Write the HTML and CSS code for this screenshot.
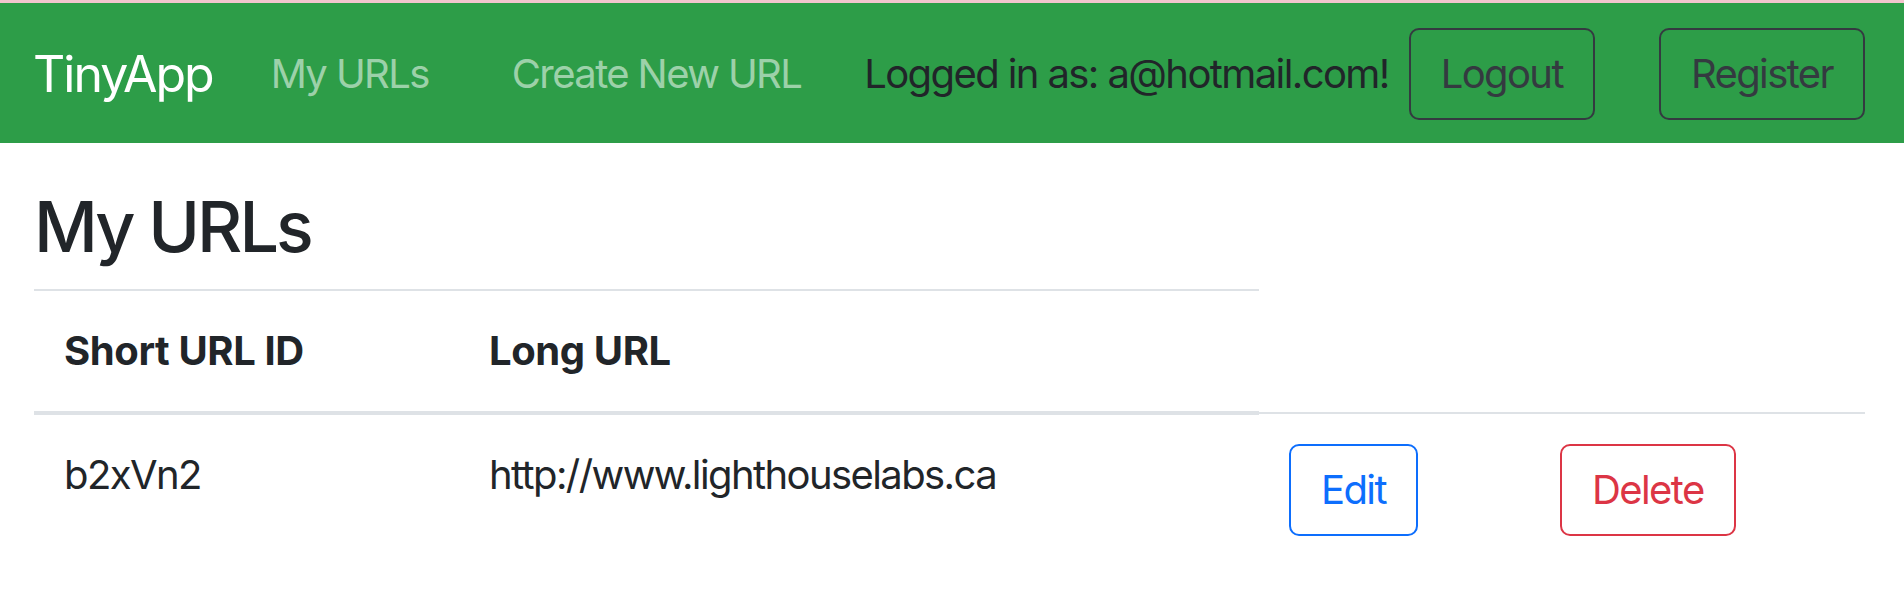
FILE: index.html
```html
<!DOCTYPE html>
<html lang="en">
<head>
<meta charset="utf-8">
<title>TinyApp</title>
<link rel="stylesheet" href="styles.css">
</head>
<body>
<div class="topline"></div>
<nav class="navbar">
  <a class="brand" href="#">TinyApp</a>
  <ul class="nav-links">
    <li><a class="nav-link" href="#">My URLs</a></li>
    <li><a class="nav-link" href="#">Create New URL</a></li>
  </ul>
  <div class="nav-right">
    <span class="user">Logged in as: a@hotmail.com!</span>
    <button class="btn btn-outline-dark">Logout</button>
    <button class="btn btn-outline-dark register">Register</button>
  </div>
</nav>
<main class="container">
  <h2 class="title">My URLs</h2>
  <table class="url-table">
    <colgroup>
      <col class="col-id">
      <col class="col-url">
      <col class="col-edit">
      <col class="col-delete">
    </colgroup>
    <thead>
      <tr><th>Short URL ID</th><th>Long URL</th></tr>
    </thead>
    <tbody>
      <tr>
        <td>b2xVn2</td>
        <td>http://www.lighthouselabs.ca</td>
        <td><button class="btn btn-outline-primary">Edit</button></td>
        <td><button class="btn btn-outline-danger">Delete</button></td>
      </tr>
    </tbody>
  </table>
</main>
</body>
</html>
```
FILE: styles.css
```css
* { box-sizing: border-box; }
html, body { margin: 0; padding: 0; }
body {
  font-family: Inter, "Noto Sans", "Liberation Sans", sans-serif;
  font-size: 40px;
  line-height: 60px;
  letter-spacing: -1.6px;
  color: #212529;
  background: #fff;
  white-space: nowrap;
}
.topline { height: 3px; background: #f3c5cd; }

.navbar {
  display: flex;
  align-items: center;
  height: 140px;
  padding: 2px 39px 0 33px;
  background: #2d9d48;
}
.brand {
  color: #fff;
  font-size: 50px;
  line-height: 75px;
  text-decoration: none;
  letter-spacing: -2px;
}
.nav-links {
  display: flex;
  list-style: none;
  margin: 0 0 0 58px;
  padding: 0;
  gap: 83px;
}
.nav-link {
  color: rgba(255, 255, 255, 0.55);
  text-decoration: none;
}
.nav-right {
  margin-left: auto;
  display: flex;
  align-items: center;
}
.user { margin-right: 20px; }

.btn {
  font-family: inherit;
  font-size: 40px;
  line-height: 60px;
  letter-spacing: -1.6px;
  padding: 14px 30px;
  border-radius: 10px;
  border: 2px solid;
  background: transparent;
  cursor: pointer;
}
.btn-outline-dark { color: #343a40; border-color: #343a40; }
.register { margin-left: 64px; }
.btn-outline-primary { color: #0d6efd; border-color: #0d6efd; }
.btn-outline-danger { color: #dc3545; border-color: #dc3545; }

.container { padding: 0 39px 0 34px; }
.title {
  font-size: 70px;
  line-height: 84px;
  font-weight: 500;
  margin: 42px 0 20px;
  letter-spacing: -3px;
}
.url-table {
  width: 100%;
  border-collapse: collapse;
  table-layout: fixed;
}
.col-id { width: 425px; }
.col-url { width: 800px; }
.col-edit { width: 271px; }
.col-delete { width: 335px; }
.url-table th,
.url-table td {
  padding: 30px;
  text-align: left;
}
.url-table th {
  font-weight: 700;
  letter-spacing: -0.4px;
  vertical-align: bottom;
  border-top: 2px solid #dee2e6;
  border-bottom: 4px solid #dee2e6;
}
.url-table td {
  vertical-align: top;
  border-top: 2px solid #dee2e6;
}
```
